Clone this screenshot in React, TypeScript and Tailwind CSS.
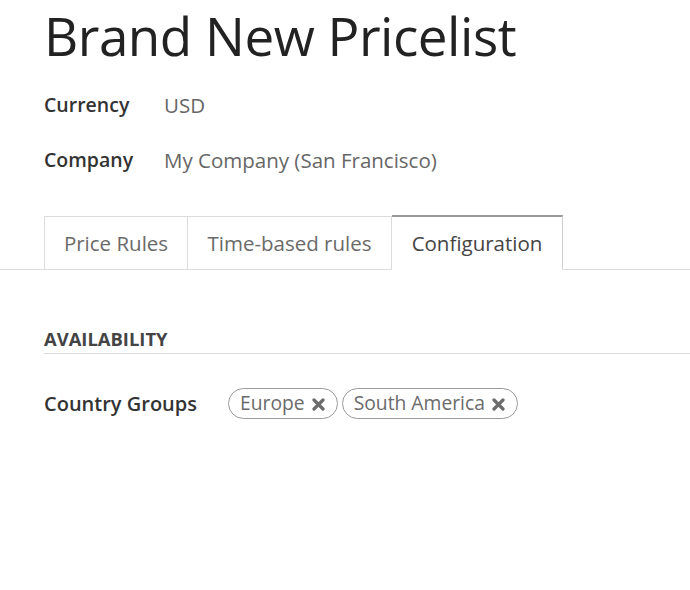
import React from "react";

function Tag({ label }: { label: string }) {
  return (
    <span className="inline-flex h-[31px] items-center gap-[7px] rounded-full border-[1.5px] border-[#9a9a9a] pl-[11px] pr-[12px] text-[19.3px] text-[#6b6b6b]">
      <span>{label}</span>
      <svg width="13" height="13" viewBox="0 0 13 13" className="mt-[1px]">
        <path d="M2 2 L11 11 M11 2 L2 11" stroke="#6b6b6b" strokeWidth="3.2" strokeLinecap="round" />
      </svg>
    </span>
  );
}

export default function App() {
  return (
    <div
      className="h-[590px] w-[690px] overflow-hidden bg-white"
      style={{ fontFamily: '"Open Sans", "Noto Sans", sans-serif' }}
    >
      <div className="pl-[44px]">
        <h1 className="text-[53px] font-normal leading-[72px] tracking-[-0.5px] text-[#222]">
          Brand New Pricelist
        </h1>
        <div className="mt-[21px] flex flex-col gap-[31px] text-[19.5px] leading-[24px]">
          <div className="flex">
            <span className="w-[120px] font-semibold text-[#333]">Currency</span>
            <span className="text-[20.5px] text-[#666]">USD</span>
          </div>
          <div className="flex">
            <span className="w-[120px] font-semibold text-[#333]">Company</span>
            <span className="text-[20.5px] text-[#666]">My Company (San Francisco)</span>
          </div>
        </div>
      </div>

      <div className="mt-[44px] flex border-b border-[#dcdcdc] pl-[44px] text-[20.5px]">
        <div className="-mb-px flex h-[54px] w-[144px] items-center justify-center border border-[#dcdcdc] text-[#6a6a6a]">
          Price Rules
        </div>
        <div className="-mb-px flex h-[54px] w-[204px] items-center justify-center border border-l-0 border-[#dcdcdc] text-[#6a6a6a]">
          Time-based rules
        </div>
        <div className="-mb-px -mt-px flex h-[55px] w-[171px] items-center justify-center border border-l-0 border-t-2 border-[#cfcfcf] border-t-[#9a9a9a] border-b-white bg-white text-[#444]">
          Configuration
        </div>
      </div>

      <div className="pl-[44px] pt-[57px]">
        <div className="border-b border-[#dcdcdc] pb-[2px] text-[18.4px] font-bold leading-[24px] text-[#444]">
          AVAILABILITY
        </div>
        <div className="mt-[34px] flex items-center">
          <span className="w-[184px] text-[20px] font-semibold text-[#333]">Country Groups</span>
          <div className="flex gap-[4px]">
            <Tag label="Europe" />
            <Tag label="South America" />
          </div>
        </div>
      </div>
    </div>
  );
}
